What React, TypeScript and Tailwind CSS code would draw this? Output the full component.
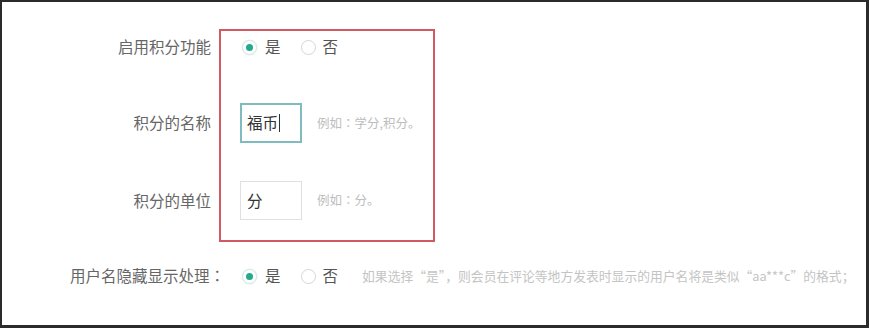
import React from "react";

const CJK = '"Noto Sans CJK SC", "Noto Sans", sans-serif';

function Colon() {
  return <span style={{ fontFamily: '"Noto Sans CJK JP", sans-serif' }}>：</span>;
}

function Radio({ checked }: { checked?: boolean }) {
  return (
    <span
      className={
        "flex h-[15px] w-[15px] items-center justify-center rounded-full border " +
        (checked ? "border-[#cfe9e3] bg-white shadow-[0_0_2px_#d6eee9]" : "border-[#d6d6d6] bg-white")
      }
    >
      {checked && <span className="h-[7px] w-[7px] rounded-full bg-[#25a88c]" />}
    </span>
  );
}

function YesNo() {
  return (
    <div className="flex items-center text-[15.5px] text-[#555]">
      <Radio checked />
      <span className="ml-[8px]">是</span>
      <span className="ml-[20px]">
        <Radio />
      </span>
      <span className="ml-[7px]">否</span>
    </div>
  );
}

function Label({ children }: { children: React.ReactNode }) {
  return (
    <div className="w-[209px] shrink-0 text-right text-[15.5px] text-[#666]">{children}</div>
  );
}

export default function App() {
  return (
    <div
      className="relative h-[328px] w-[869px] overflow-hidden border-t-2 border-l-2 border-r-[3px] border-b-[3px] border-[#2b2b2b] bg-white"
      style={{ fontFamily: CJK }}
    >
      <div className="flex flex-col">
        <div className="mt-[33px] flex h-[24px] items-center">
          <Label>启用积分功能</Label>
          <div className="ml-[31px]">
            <YesNo />
          </div>
        </div>

        <div className="mt-[44px] flex items-center">
          <Label>积分的名称</Label>
          <div className="ml-[29px] flex h-[40px] w-[62px] items-center border-2 border-[#7fbcc0] pl-[5px] text-[15.5px] text-[#333]">
            福币<span className="ml-[1px] h-[18px] w-px bg-[#333]" />
          </div>
          <span className="ml-[15px] text-[12.5px] text-[#bdbdbd]">
            例如<Colon />学分,积分。
          </span>
        </div>

        <div className="mt-[38px] flex items-center">
          <Label>积分的单位</Label>
          <div className="ml-[29px] flex h-[39px] w-[62px] items-center border border-[#e0e0e0] pl-[6px] text-[15.5px] text-[#333]">
            分
          </div>
          <span className="ml-[15px] text-[12.5px] text-[#bdbdbd]">
            例如<Colon />分。
          </span>
        </div>

        <div className="mt-[44px] flex h-[24px] items-center">
          <div className="ml-[68px] text-[15.5px] text-[#666]">
            用户名隐藏显示处理<Colon />
          </div>
          <div className="ml-[17px]">
            <YesNo />
          </div>
          <span className="ml-[24px] text-[12.8px] text-[#c4c4c4]">
            如果选择“是”，则会员在评论等地方发表时显示的用户名将是类似“aa***c”的格式；
          </span>
        </div>
      </div>

      {/* red annotation box */}
      <div className="pointer-events-none absolute left-[217px] top-[27px] h-[213px] w-[216px] border-2 border-[#d05a60]" />
    </div>
  );
}
